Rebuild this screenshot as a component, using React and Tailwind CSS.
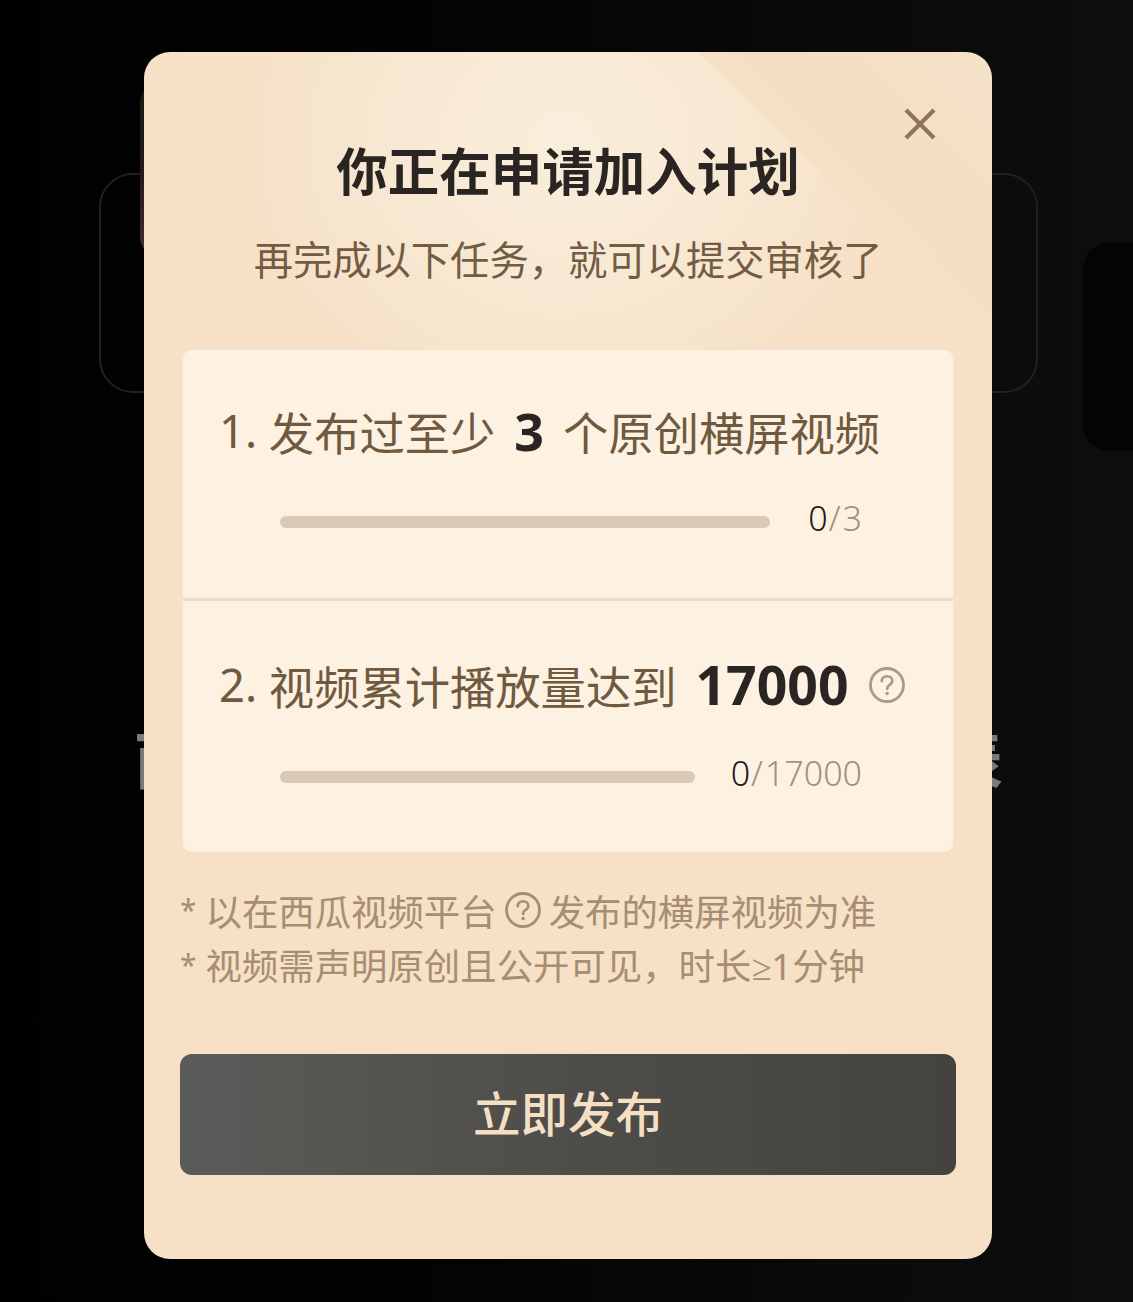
import React from "react";

const font = { fontFamily: '"Noto Sans CJK SC", "Noto Sans", sans-serif' };

function Help({ className }) {
  return (
    <svg viewBox="0 0 36 36" fill="none" stroke="currentColor" className={className}>
      <circle cx="18" cy="18" r="16.5" strokeWidth="2.8" />
      <path d="M12.8 14.2c0-3 2.3-5 5.3-5s5.2 1.900 5.200 4.500c0 2-1 3.100-2.700 4.200-1.800 1.200-2.500 2-2.500 4" strokeWidth="2.600" strokeLinecap="round" />
      <circle cx="18.100" cy="26.500" r="1.800" fill="currentColor" stroke="none" />
    </svg>
  );
}

function Progress({ width, done, total }) {
  return (
    <div className="flex items-center justify-between pl-[97px] pr-[91px]">
      <div className={`h-[12px] rounded-full bg-[#dac9b6] ${width}`} />
      <div className="-translate-y-[4px] font-['Noto_Sans'] text-[34px] font-light leading-[44px] text-[#9c9284]">
        <span className="text-[#1c1a18]">{done}</span>
        <span className="ml-[1px] mr-[2px]">/</span>
        {total}
      </div>
    </div>
  );
}

export default function App() {
  return (
    <div style={font} className="relative h-[1302px] w-[1133px] overflow-hidden bg-[linear-gradient(90deg,#010101_0%,#030303_35%,#0e0e0e_100%)]">
      {/* page behind the dialog */}
      <div className="absolute left-[140px] top-[80px] h-[180px] w-[30px] rounded-l-[24px] bg-[linear-gradient(180deg,#1c1c10_0%,#241a1a_50%,#4a2a3a_100%)]" />
      <div className="pt-[173px]">
        <div className="flex items-start">
          <div className="ml-[99px] h-[220px] w-[939px] shrink-0 rounded-[34px] border-2 border-[#212121]" />
          <div className="ml-[45px] mt-[70px] h-[208px] w-[80px] shrink-0 rounded-l-[26px] bg-[#040404]" />
        </div>
        <div className="ml-[134px] mt-[261px] flex w-[869px] justify-between text-[62px] font-bold leading-[90px] text-[#7b7b75]">
          <span>西</span>
          <span>表</span>
        </div>
      </div>

      {/* dialog */}
      <div className="absolute inset-0">
        <div className="relative ml-[144px] mt-[52px] flex h-[1207px] w-[848px] flex-col rounded-[26px] bg-[#f6e0c6] bg-[linear-gradient(225deg,#f5e2c9_0px,#f4dec2_150px,#f6e0c6_207px,transparent_208px),radial-gradient(ellipse_340px_300px_at_420px_90px,#f9eedc_0%,#f8e9d4_45%,#f6e0c6_100%)]">
          <button className="absolute right-[55px] top-[55px] text-[#8d7556]">
            <svg viewBox="0 0 34 34" className="h-[34px] w-[34px]" fill="none" stroke="currentColor" strokeWidth="4.200">
              <path d="M3 3l28 28M31 3L3 31" />
            </svg>
          </button>

          <h1 className="mt-[81px] text-center text-[51.500px] font-bold leading-[72px] text-[#2a2522]">你正在申请加入计划</h1>
          <p className="mt-[24px] text-center text-[39.300px] leading-[58px] text-[#735c42]">再完成以下任务，就可以提交审核了</p>

          <div className="mx-[38px] mt-[62px] flex h-[504px] flex-col rounded-[10px] border border-[#f3e4d1] bg-[#fdf1e2]">
            <div className="h-[251px] border-b-[3px] border-[#e9ddcf] pt-[46px]">
              <div className="flex h-[70px] items-center pl-[36px] text-[45.300px] leading-[70px] text-[#6f5a40]">
                <span className="font-['Noto_Sans']">1.&nbsp;</span>
                <span>发布过至少</span>
                <span className="ml-[19px] mr-[19px] font-['Noto_Sans'] text-[52px] font-bold text-[#2a2522]">3</span>
                <span>个原创横屏视频</span>
              </div>
              <div className="mt-[34px]"><Progress width="w-[490px]" done="0" total="3" /></div>
            </div>
            <div className="pt-[49px]">
              <div className="flex h-[70px] items-center pl-[36px] text-[45.300px] leading-[70px] text-[#6f5a40]">
                <span className="font-['Noto_Sans']">2.&nbsp;</span>
                <span>视频累计播放量达到</span>
                <span className="ml-[19px] font-['Noto_Sans'] text-[53.500px] font-bold text-[#2a2522]">17000</span>
                <Help className="ml-[20px] h-[36px] w-[36px] text-[#a89b8a]" />
              </div>
              <div className="mt-[35px]"><Progress width="w-[415px]" done="0" total="17000" /></div>
            </div>
          </div>

          <div className="mx-[36px] mt-[30px] text-[36.400px] leading-[54px] text-[#a58e72]">
            <div className="flex items-center whitespace-nowrap">
              <span className="mr-[9px] font-['Noto_Sans'] text-[30px]">*</span>
              <span>以在西瓜视频平台</span>
              <Help className="mx-[8px] h-[36px] w-[36px]" />
              <span>发布的横屏视频为准</span>
            </div>
            <div className="flex items-center whitespace-nowrap">
              <span className="mr-[9px] font-['Noto_Sans'] text-[30px]">*</span>
              <span>视频需声明原创且公开可见，时长<span className="font-['Noto_Sans']">≥1</span>分钟</span>
            </div>
          </div>

          <button className="mx-[36px] mt-[61px] flex h-[121px] items-center justify-center rounded-[12px] bg-[linear-gradient(90deg,#5b5b59_0%,#4e4d49_50%,#444340_100%)] pb-[5px] text-[47.500px] font-medium text-[#f5dfc3]">
            立即发布
          </button>
        </div>
      </div>
    </div>
  );
}
